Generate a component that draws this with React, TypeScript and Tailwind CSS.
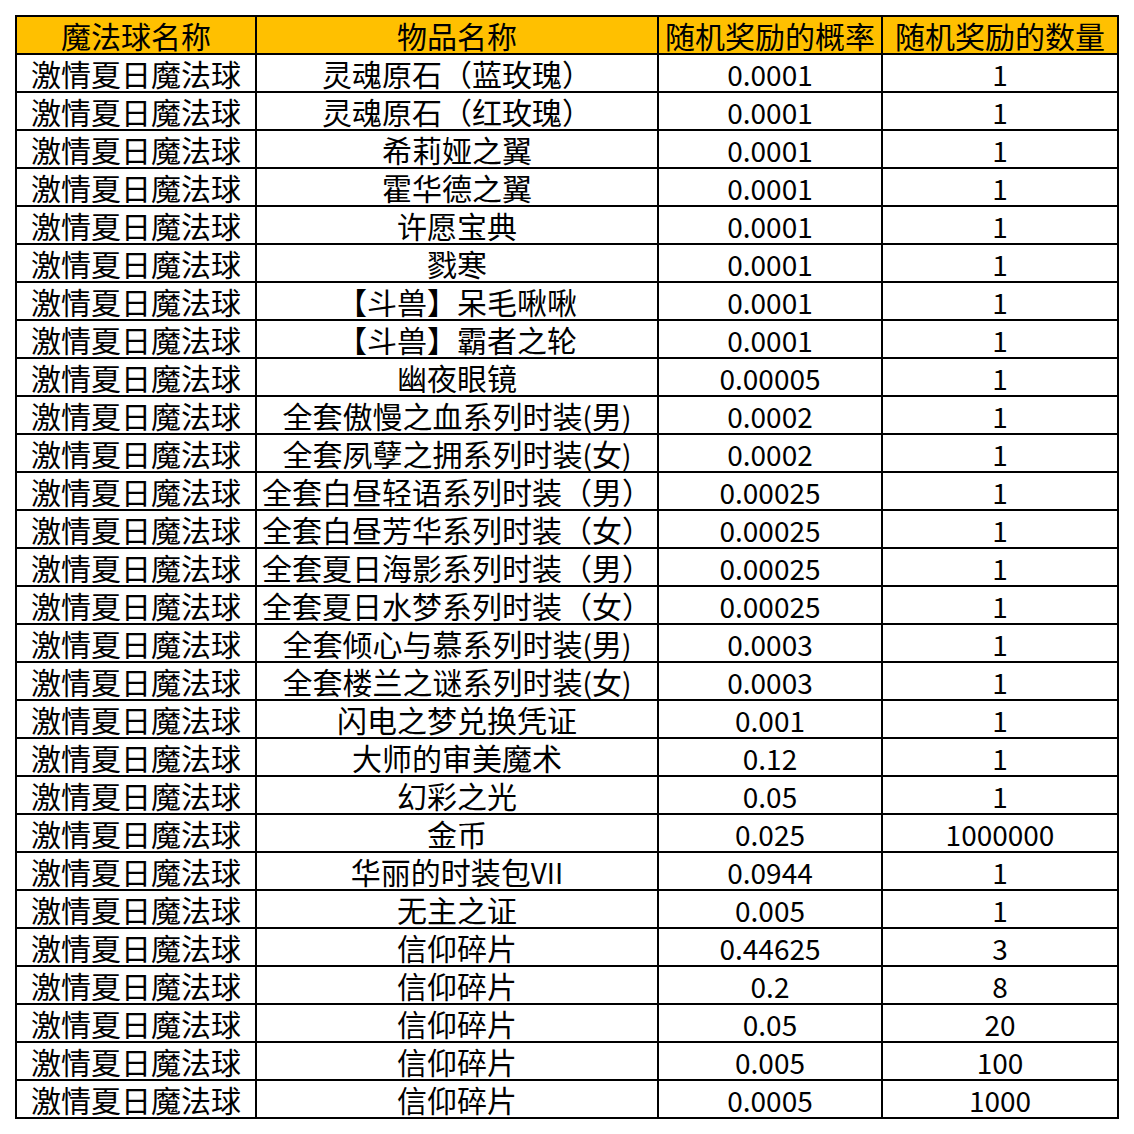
const header = ["魔法球名称", "物品名称", "随机奖励的概率", "随机奖励的数量"];

const rows: [string, string, string][] = [
  ["灵魂原石（蓝玫瑰）", "0.0001", "1"],
  ["灵魂原石（红玫瑰）", "0.0001", "1"],
  ["希莉娅之翼", "0.0001", "1"],
  ["霍华德之翼", "0.0001", "1"],
  ["许愿宝典", "0.0001", "1"],
  ["戮寒", "0.0001", "1"],
  ["【斗兽】呆毛啾啾", "0.0001", "1"],
  ["【斗兽】霸者之轮", "0.0001", "1"],
  ["幽夜眼镜", "0.00005", "1"],
  ["全套傲慢之血系列时装(男)", "0.0002", "1"],
  ["全套夙孽之拥系列时装(女)", "0.0002", "1"],
  ["全套白昼轻语系列时装（男）", "0.00025", "1"],
  ["全套白昼芳华系列时装（女）", "0.00025", "1"],
  ["全套夏日海影系列时装（男）", "0.00025", "1"],
  ["全套夏日水梦系列时装（女）", "0.00025", "1"],
  ["全套倾心与慕系列时装(男)", "0.0003", "1"],
  ["全套楼兰之谜系列时装(女)", "0.0003", "1"],
  ["闪电之梦兑换凭证", "0.001", "1"],
  ["大师的审美魔术", "0.12", "1"],
  ["幻彩之光", "0.05", "1"],
  ["金币", "0.025", "1000000"],
  ["华丽的时装包VII", "0.0944", "1"],
  ["无主之证", "0.005", "1"],
  ["信仰碎片", "0.44625", "3"],
  ["信仰碎片", "0.2", "8"],
  ["信仰碎片", "0.05", "20"],
  ["信仰碎片", "0.005", "100"],
  ["信仰碎片", "0.0005", "1000"],
];

// CJK glyphs sit a bit wider than the digits in the original sheet
function Mixed({ text }: { text: string }) {
  const parts = text.match(/[\u3000-\u9fff\uff00-\uffef]+|[^\u3000-\u9fff\uff00-\uffef]+/g) ?? [];
  return (
    <>
      {parts.map((p, i) =>
        /[\u3000-\u9fff\uff00-\uffef]/.test(p) ? (
          <span key={i} className="text-[30px]">
            {p}
          </span>
        ) : (
          <span key={i}>{p}</span>
        ),
      )}
    </>
  );
}

function Cell({ text, head }: { text: string; head?: boolean }) {
  return (
    <div
      className={`flex h-[36px] items-end justify-center whitespace-nowrap text-[28px] leading-[34px] text-black ${
        head ? "bg-[#ffc000]" : "bg-white"
      }`}
    >
      <span>
        <Mixed text={text} />
      </span>
    </div>
  );
}

export default function App() {
  return (
    <div
      className="min-h-[1134px] w-[1134px] bg-white pl-[15px] pt-[15px]"
      style={{ fontFamily: '"Noto Sans CJK SC", "Noto Sans", sans-serif' }}
    >
      <div className="grid w-[1104px] grid-cols-[238px_400px_222px_234px] gap-[2px] bg-black p-[2px]">
        {header.map((h) => (
          <Cell key={h} text={h} head />
        ))}
        {rows.map((r, i) => (
          <div key={i} className="contents">
            <Cell text="激情夏日魔法球" />
            <Cell text={r[0]} />
            <Cell text={r[1]} />
            <Cell text={r[2]} />
          </div>
        ))}
      </div>
    </div>
  );
}
